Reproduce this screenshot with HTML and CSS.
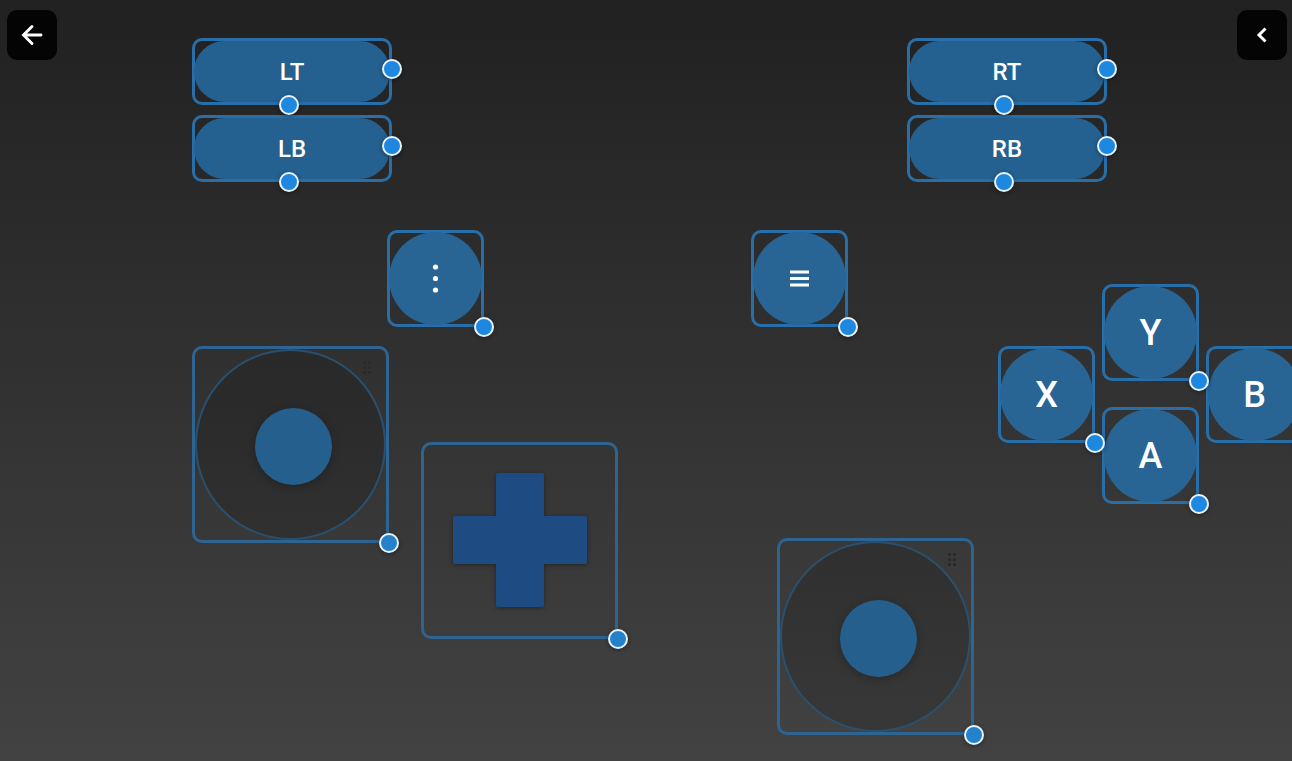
FILE: index.html
```html
<!DOCTYPE html>
<html lang="en">
<head>
<meta charset="utf-8">
<meta name="viewport" content="width=device-width, initial-scale=1">
<title>Gamepad layout editor</title>
<link rel="stylesheet" href="styles.css">
</head>
<body>
<header class="toolbar">
  <button class="tool" type="button" aria-label="Back">
    <svg class="tool-icon" viewBox="0 0 26 26"><path d="M22 13H5M13 4.500L4.500 13l8.500 8.500" fill="none" stroke="#fff" stroke-width="2.900" stroke-linecap="round" stroke-linejoin="miter"/></svg>
  </button>
  <button class="tool" type="button" aria-label="Open panel">
    <svg class="tool-icon" viewBox="0 0 26 26"><path d="M16.500 6.500L10 13l6.500 6.500" fill="none" stroke="#fff" stroke-width="3"/></svg>
  </button>
</header>
<main class="canvas">
  <div class="node bar lt"><button class="key" type="button">LT</button><i class="handle side"></i><i class="handle bottom"></i></div>
  <div class="node bar lb"><button class="key" type="button">LB</button><i class="handle side"></i><i class="handle bottom"></i></div>
  <div class="node bar rt"><button class="key" type="button">RT</button><i class="handle side"></i><i class="handle bottom"></i></div>
  <div class="node bar rb"><button class="key" type="button">RB</button><i class="handle side"></i><i class="handle bottom"></i></div>

  <div class="node round view">
    <button class="key" type="button" aria-label="View">
      <svg class="key-icon" viewBox="0 0 36 36"><circle cx="17.500" cy="6" r="2.600"/><circle cx="17.500" cy="17.500" r="2.600"/><circle cx="17.500" cy="29" r="2.600"/></svg>
    </button><i class="handle corner"></i>
  </div>
  <div class="node round menu">
    <button class="key" type="button" aria-label="Menu">
      <svg class="key-icon" viewBox="0 0 36 36"><path d="M8 9.500h19v3H8zM8 16h19v3H8zM8 22.500h19v3H8z"/></svg>
    </button><i class="handle corner"></i>
  </div>

  <div class="node round y"><button class="key" type="button">Y</button><i class="handle corner"></i></div>
  <div class="node round x"><button class="key" type="button">X</button><i class="handle corner"></i></div>
  <div class="node round b"><button class="key" type="button">B</button><i class="handle corner"></i></div>
  <div class="node round a"><button class="key" type="button">A</button><i class="handle corner"></i></div>

  <div class="node large stick-left">
    <div class="ring"></div>
    <button class="thumb" type="button" aria-label="Left stick"></button>
    <svg class="grip" viewBox="0 0 10 14"><path d="M1 0h3v3H1zM6 0h3v3H6zM1 5h3v3H1zM6 5h3v3H6zM1 10h3v3H1zM6 10h3v3H6z"/></svg>
    <i class="handle corner"></i>
  </div>
  <div class="node large stick-right">
    <div class="ring"></div>
    <button class="thumb" type="button" aria-label="Right stick"></button>
    <svg class="grip" viewBox="0 0 10 14"><path d="M1 0h3v3H1zM6 0h3v3H6zM1 5h3v3H1zM6 5h3v3H6zM1 10h3v3H1zM6 10h3v3H6z"/></svg>
    <i class="handle corner"></i>
  </div>
  <div class="node large dpad">
    <button class="cross" type="button" aria-label="Directional pad">
      <svg class="cross-shape" viewBox="0 0 134 134"><path d="M45 0h44q2 0 2 2v41h41q2 0 2 2v44q0 2-2 2H91v41q0 2-2 2H45q-2 0-2-2V91H2q-2 0-2-2V45q0-2 2-2h41V2q0-2 2-2z"/></svg>
    </button>
    <i class="handle corner"></i>
  </div>
</main>
</body>
</html>
```
FILE: styles.css
```css
* { box-sizing: border-box; }

body {
  margin: 0;
  min-height: 100vh;
  overflow: hidden;
  background: linear-gradient(#212121, #424242);
  color: #fff;
  font-family: Roboto, "Liberation Sans", sans-serif;
}

button {
  padding: 0;
  border: 0;
  color: inherit;
  font: inherit;
  cursor: pointer;
}

.toolbar {
  display: flex;
  justify-content: space-between;
  padding: 10px 5px 0 7px;
}

.tool {
  display: grid;
  place-items: center;
  width: 50px;
  height: 50px;
  border-radius: 10px;
  background: #040404;
}

.tool-icon { width: 26px; height: 26px; }

.canvas { position: absolute; inset: 0; overflow: hidden; pointer-events: none; }

/* Controls placed freely on the canvas */
.node {
  position: absolute;
  display: grid;
  border: 3px solid #286ea8;
  border-radius: 10px;
  pointer-events: auto;
}

.bar { width: 200px; height: 67px; font-size: 24px; font-weight: 500; }
.round { width: 97px; height: 97px; font-size: 36px; font-weight: 500; }
.large { width: 197px; height: 197px; border-color: #2d6491; place-items: center; }

.lt { left: 192px; top: 38px; }
.lb { left: 192px; top: 115px; }
.rt { left: 907px; top: 38px; }
.rb { left: 907px; top: 115px; }
.view { left: 387px; top: 230px; }
.menu { left: 751px; top: 230px; }
.y { left: 1102px; top: 284px; }
.x { left: 998px; top: 346px; }
.b { left: 1206px; top: 346px; }
.a { left: 1102px; top: 407px; }
.stick-left { left: 192px; top: 346px; }
.stick-right { left: 777px; top: 538px; }
.dpad { left: 421px; top: 442px; }

.key {
  display: grid;
  place-items: center;
  margin: 0 -1px;
  border-radius: 31px;
  background: #246090;
}

.round .key { margin: -1px; border-radius: 50%; background: #286494; }
.key-icon { width: 36px; height: 36px; fill: #fff; }

.ring {
  grid-area: 1 / 1;
  width: 191px;
  height: 191px;
  border: 2px solid #29506f;
  border-radius: 50%;
  background: rgba(0, 0, 0, 0.14);
}

.thumb {
  grid-area: 1 / 1;
  width: 77px;
  height: 77px;
  margin: 3px 0 0 5px;
  border-radius: 50%;
  background: #245f8e;
  box-shadow: 0 2px 8px rgba(0, 0, 0, 0.25);
}

.grip { position: absolute; top: 12px; right: 14px; width: 10px; height: 14px; fill: #2a2a2a; }

.cross { width: 134px; height: 134px; margin-bottom: 2px; background: none; }
.cross-shape {
  display: block;
  fill: #1e4c82;
  filter: drop-shadow(0 1px 2px rgba(0, 0, 0, 0.4));
}

.handle {
  position: absolute;
  width: 20px;
  height: 20px;
  border: 2px solid #e9f3fb;
  border-radius: 50%;
  background: #1e88e0;
  box-shadow: 0 1px 4px rgba(0, 0, 0, 0.4);
  z-index: 1;
}

.large .handle { background: #2482cc; }
.corner { right: -13px; bottom: -13px; }
.side { right: -13px; top: 18px; }
.bottom { left: 84px; bottom: -13px; }
```
